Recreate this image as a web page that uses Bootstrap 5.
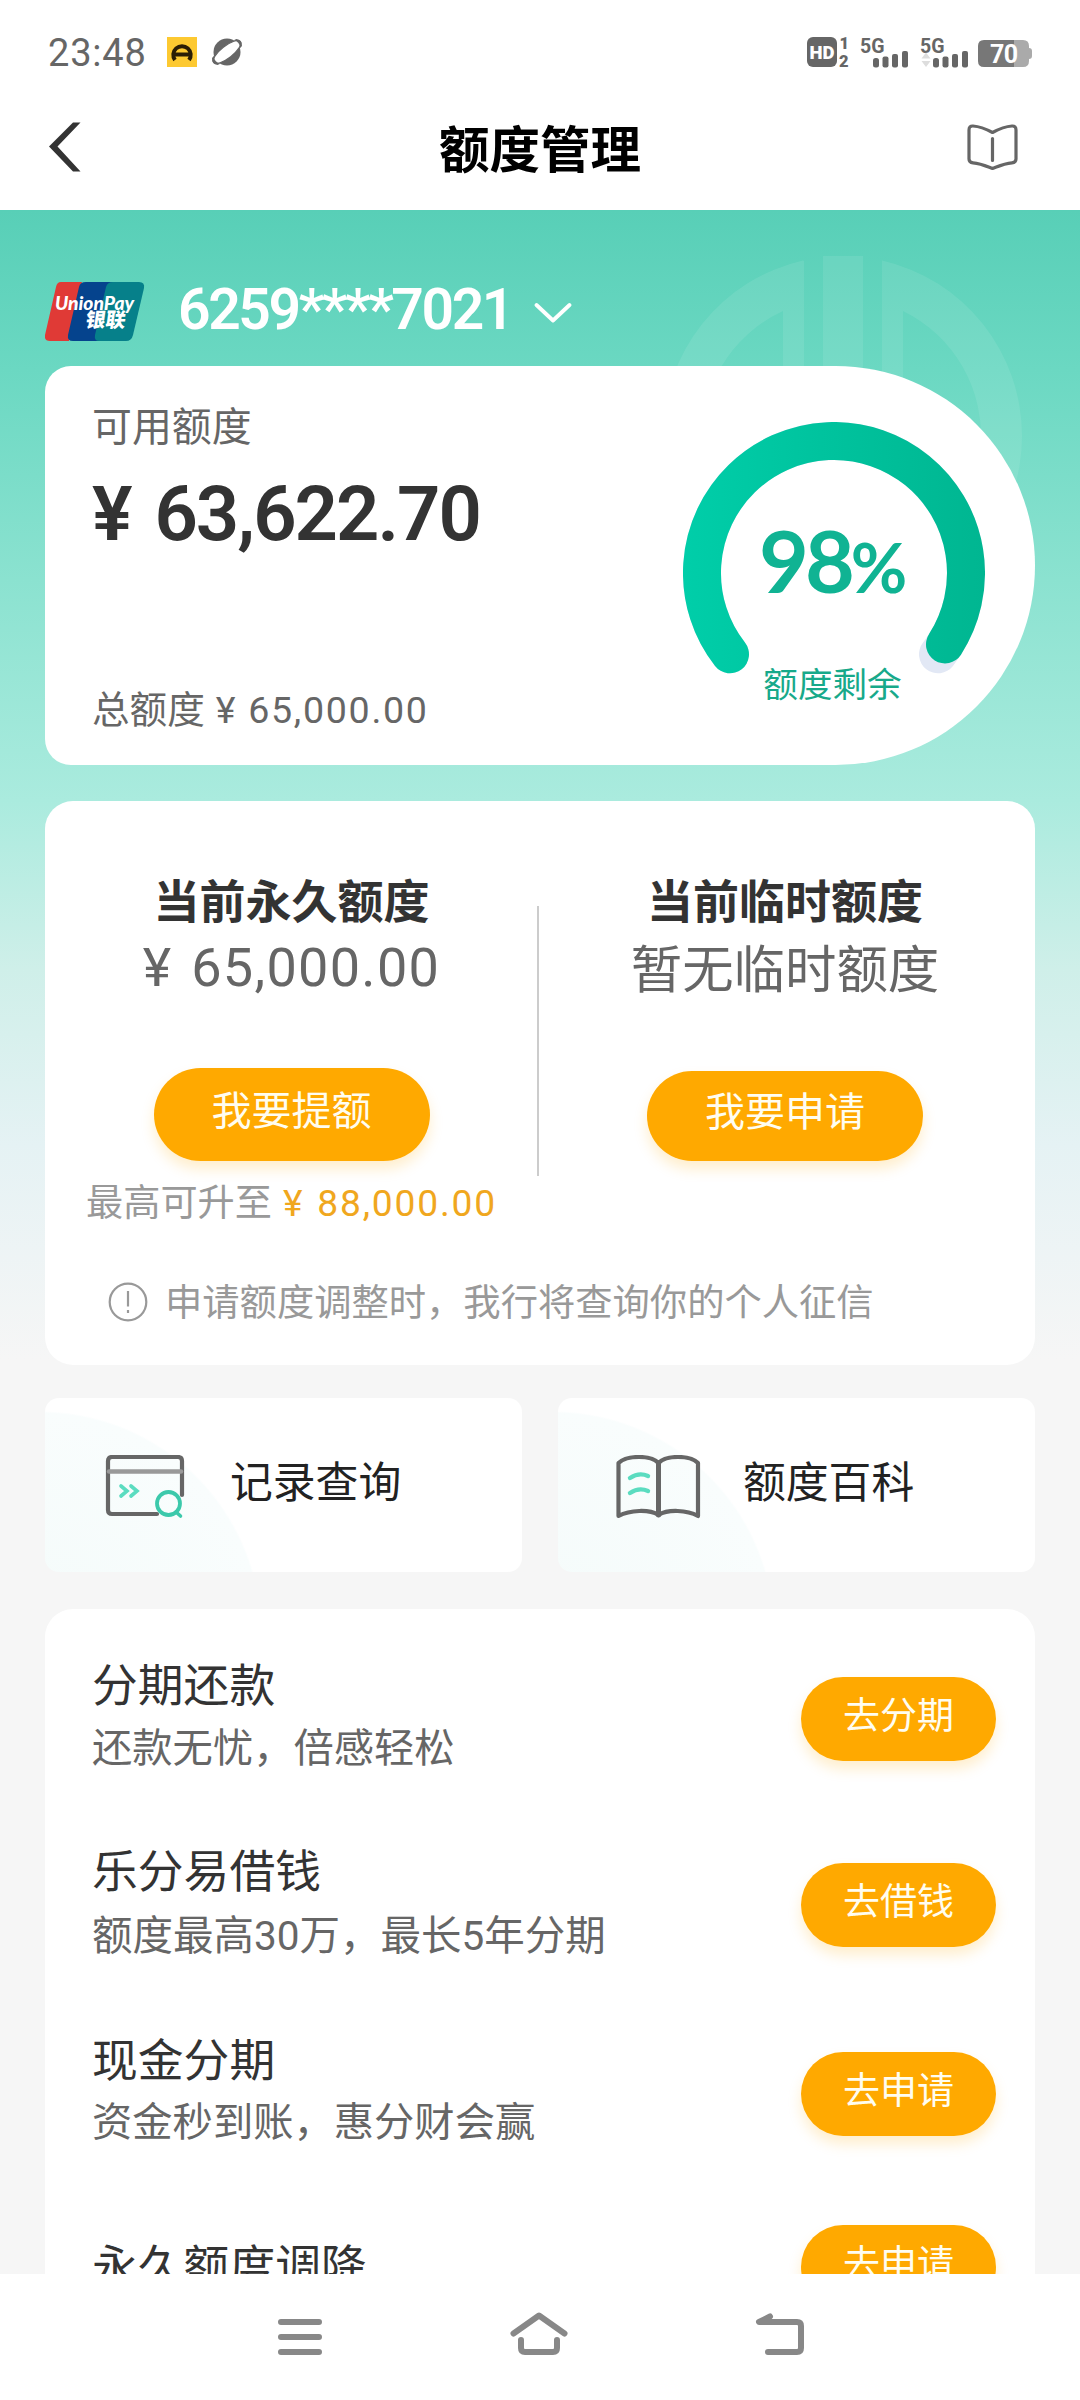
<!DOCTYPE html>
<html lang="zh-CN">
<head>
<meta charset="utf-8">
<meta name="viewport" content="width=device-width, initial-scale=1">
<title>额度管理</title>
<link href="https://cdn.jsdelivr.net/npm/bootstrap@5.3.0/dist/css/bootstrap.min.css" rel="stylesheet">
<style>
  body { font-family: "Noto Sans CJK SC", sans-serif; color: #333; background: #fff; }
  .num { font-family: Roboto, "Noto Sans CJK SC", sans-serif; white-space: pre; }
  .screen { width: 1080px; height: 2400px; }
  .status { height: 100px; padding: 4px 48px 0 48px; color: #666; }
  .clock { font-size: 38px; line-height: 60px; width: 119px; letter-spacing: .8px; padding-top: 2px; }
  .titlebar { height: 110px; padding: 0 62px 0 49px; }
  .titlebar h1 { font-size: 50.5px; line-height: 72px; font-weight: 700; color: #000; margin: -19px 0 0 32px; }
  .titlebar svg { margin-top: -17px; }
  .page { height: 2064px; padding: 0 45px;
    background: linear-gradient(180deg, #58cfb7 0, #6bd8c2 160px, #8be2d0 370px, #aaebde 590px, #cfefe9 760px, #e5f2f4 935px, #f6f6f6 1150px, #f6f6f6 100%); }
  .watermark { left: 663px; top: 46px; }
  .account { height: 156px; padding-top: 72px; }
  .account .num { font-size: 57px; line-height: 56px; font-weight: 600; color: #fff; margin-left: 33px; width: 346px; letter-spacing: -2.4px; }
  .account .caret { margin: 20px 0 0 10px; }
  .panel { background: #fff; border-radius: 28px; }
  .avail { height: 399px; border-radius: 26px 200px 200px 26px; padding-left: 47px; margin-bottom: 36px; }
  .c6 { color: #666; } .c9 { color: #999; }
  .avail .cap1 { font-size: 39.9px; line-height: 60px; padding-top: 28px; }
  .avail .big { font-size: 76px; line-height: 90px; font-weight: 600; margin-top: 15px; letter-spacing: -2px; word-spacing: 7px; }
  .avail .sum { font-size: 37.6px; line-height: 60px; margin-top: 118px; }
  .avail .sum .num { margin-left: 11px; letter-spacing: 1.7px; word-spacing: 0; }
  .gauge { width: 302px; height: 302px; margin: 56px 50px 0 0; }
  .gauge .pct { left: 76px; top: 93px; line-height: 90px; font-family: Lato, sans-serif; font-size: 86px; font-weight: 700; color: #10b393; letter-spacing: -4px; white-space: nowrap; }
  .gauge .pct span { font-size: 69px; letter-spacing: 0; }
  .gauge .lbl { left: 0; width: 302px; top: 230px; font-size: 34.6px; line-height: 60px; color: #17a98a; padding-right: 3px; }
  .limits { height: 564px; margin-bottom: 33px; padding-top: 64px; }
  .limits .halves { height: 345px; }
  .half-l { width: 493px; } .half-r { width: 492px; }
  .limits h2 { font-size: 46px; line-height: 66px; font-weight: 700; color: #333; }
  .limits .val { font-size: 51.4px; line-height: 70px; color: #666; }
  .limits .val.num { font-size: 54px; letter-spacing: 1.3px; word-spacing: 4px; padding-top: 4px; line-height: 66px; }
  .rule { width: 2px; height: 270px; background: #ccc; margin: 41px 0 0 -1px; }
  .pill { background: #ffa900; color: #fffdf0; border-radius: 47px; box-shadow: 0 8px 14px rgba(255,169,0,.2); font-size: 40px; line-height: 48px; flex: none; }
  .pill-a { width: 276px; height: 93px; padding-bottom: 13px; margin-top: 67px; }
  .pill-b { width: 276px; height: 90px; padding-bottom: 14px; margin-top: 70px; }
  .upto { font-size: 37.2px; line-height: 50px; margin-top: 14px; color: #f0a71e; }
  .upto .num { margin-left: 11px; letter-spacing: 1.8px; word-spacing: 2px; }
  .notice { font-size: 37.3px; line-height: 50px; padding-left: 63px; margin-top: 65px; }
  .notice svg { margin: 4px 17px 0 0; }
  .tile { width: 477px; height: 174px; border-radius: 14px; padding-left: 57px;
    background: radial-gradient(circle at -5px 235px, #f4fbfa 0, #f9fdfd 220px, #fff 222px); font-size: 42.8px; color: #222; }
  .tile svg { margin: 3px 40px 0 0; }
  .tile span { line-height: 60px; margin-top: -12px; }
  .offers { height: 720px; margin-top: 37px; padding: 43px 39px 0 47px; }
  .offer h3 { font-size: 45.8px; line-height: 60px; color: #333; font-weight: 400; }
  .offer p { font-size: 40.3px; line-height: 60px; color: #666; padding-top: 3px; }
  .offer .pill { width: 195px; height: 84px; font-size: 37px; margin-top: 25px; padding-bottom: 12px; }
  .offer-1 { height: 186px; } .offer-2 { height: 189px; } .offer-3 { height: 198px; }
  .offer-2 p { padding-top: 5px; font-size: 40.5px; }
  .offer-3 p { padding-top: 2px; }
  .offer-4 h3 { padding-top: 8px; }
  .offer-4 .pill { margin-top: 0; }
  .navkeys { height: 126px; padding: 30px 272px 0 276px; }
</style>
</head>
<body>
<div class="screen d-flex flex-column overflow-hidden">
  <header class="status d-flex align-items-center">
    <div class="clock num">23:48</div>
    <svg width="76" height="30" viewBox="0 0 76 30">
      <rect width="30" height="30" fill="#fdc931"/>
      <path d="M8 23 A8.7 8.7 0 1 1 22 23" fill="none" stroke="#2b1d05" stroke-width="4"/>
      <path d="M7 15.500h16v4H7z" fill="#2b1d05"/>
      <circle cx="60" cy="15" r="13.500" fill="#666"/>
      <g transform="rotate(-38 60 15)"><ellipse cx="60" cy="15" rx="17" ry="6" fill="#fff" stroke="#666" stroke-width="1.200"/><path d="M44.500 10.500q-4 4.500 0 9l3 .5q-4-5 0-10zM75.500 10.500q4 4.500 0 9l-3 .5q4-5 0-10z" fill="#666"/></g>
    </svg>
    <svg class="ms-auto overflow-visible" width="225" height="60" viewBox="807 21 225 60" fill="#666" font-family="Roboto, sans-serif">
      <rect x="807" y="36" width="30" height="30" rx="6"/>
      <text x="809.500" y="58" font-size="19" font-weight="900" fill="#fff" textLength="25" lengthAdjust="spacingAndGlyphs">HD</text>
      <text x="839.500" y="48" font-size="16.500" font-weight="900">1</text>
      <text x="839" y="66" font-size="16.500" font-weight="900">2</text>
      <text x="860" y="51.500" font-size="20.500" font-weight="700" textLength="24.500" lengthAdjust="spacingAndGlyphs">5G</text>
      <text x="920" y="51.500" font-size="20.500" font-weight="700" textLength="24.500" lengthAdjust="spacingAndGlyphs">5G</text>
      <g id="bars"><rect x="873" y="57" width="6" height="9.500" rx="2.500"/><rect x="882.500" y="55.500" width="6" height="11" rx="2"/><rect x="892" y="53" width="6" height="13.500" rx="2"/><rect x="902" y="50" width="6" height="16.500" rx="2"/></g>
      <use href="#bars" x="60"/>
      <path d="M926 51.500l4.500 6h-9zM926 66l-4.500-6h9z" fill="#ddd"/>
      <path d="M984 39h30v27h-30q-6 0-6-6V45q0-6 6-6z" fill="#777"/>
      <path d="M1014 39h9q6 0 6 6v2q3 0 3 3v5q0 3-3 3v2q0 6-6 6h-9z" fill="#aaa"/>
      <text x="990" y="61.500" font-size="25" font-weight="700" fill="#fff" textLength="28">70</text>
    </svg>
  </header>

  <div class="titlebar d-flex align-items-center justify-content-between">
    <svg width="32" height="50" viewBox="0 0 32 50"><path d="M24 0.500h7.500L8.500 24.500l23 25H24L0 24.500z" fill="#333"/></svg>
    <h1>额度管理</h1>
    <svg width="51" height="46" viewBox="0 0 51 46" fill="none" stroke="#666" stroke-width="3.200" stroke-linecap="round" stroke-linejoin="round"><path d="M25.500 8.500C32 5 38 2.500 45 2q4-.3 4 4v29q0 3.500-4 3.800C37 39.500 32 42 25.500 44.500 19 42 14 39.500 6 38.800q-4-.3-4-3.800V6q0-4.300 4-4C13 2.500 19 5 25.500 8.500zM25.500 14.500v22"/></svg>
  </div>

  <main class="page position-relative overflow-hidden">
    <svg class="watermark position-absolute" width="360" height="360" viewBox="-180 -180 360 360" fill="#fff" fill-opacity=".085">
      <path d="M-40-175.500A180 180 0 0 0-40 175.500V135A139 139 0 0 1-60-125V100H-39V-175zM39-175.500A180 180 0 0 1 39 175.500V133A139 139 0 0 0 60-125V100H39zM-20-180H20V100H-20z"/>
    </svg>

    <div class="account d-flex position-relative">
      <svg width="100" height="60" viewBox="0 0 100 60" class="flex-shrink-0">
        <path d="M16 0H37L24 59H5Q-1 59 0 53L11 5Q12 0 16 0z" fill="#e03a36"/>
        <path d="M41 0H70L55 59H28Q22 59 23 53L34 5Q35 0 41 0z" fill="#05438d"/>
        <path d="M68 0H94Q100 0 99 6L88 53Q86.500 59 81 59H54Q49 59 50 53L61 5Q62.500 0 68 0z" fill="#06808a"/>
        <g font-family="Lato, sans-serif" font-weight="900" font-style="italic" fill="#fff"><text x="10" y="28" font-size="18.500" textLength="79" lengthAdjust="spacingAndGlyphs">UnionPay</text></g>
        <text x="40" y="45" font-size="20" font-weight="900" fill="#fff" transform="skewX(-8) translate(6 0)" font-family="Noto Sans CJK SC, sans-serif">银联</text>
      </svg>
      <span class="num">6259****7021</span>
      <svg class="caret" width="38" height="22" viewBox="0 0 38 22"><path d="M2.500 3L19 18.500 35.500 3" fill="none" stroke="#fff" stroke-width="3.800" stroke-linecap="round" stroke-linejoin="round"/></svg>
    </div>

    <section class="panel avail d-flex justify-content-between position-relative">
      <div>
        <div class="cap1 c6">可用额度</div>
        <div class="big num">¥ 63,622.70</div>
        <div class="sum c6">总额度<span class="num">¥ 65,000.00</span></div>
      </div>
      <div class="gauge position-relative">
        <svg width="302" height="302" viewBox="-151 -151 302 302" fill="none" stroke-width="38" stroke-linecap="round">
          <defs><linearGradient id="arc" gradientUnits="userSpaceOnUse" x1="-151" y1="0" x2="151" y2="0"><stop stop-color="#00cea9"/><stop offset="1" stop-color="#00b691"/></linearGradient></defs>
          <path d="M-104 81.300A132 132 0 1 1 104 81.300" stroke="#e2e8f5"/>
          <path d="M-104 81.300A132 132 0 1 1 111 71.400" stroke="url(#arc)"/>
        </svg>
        <div class="pct position-absolute">98<span>%</span></div>
        <div class="lbl position-absolute text-center">额度剩余</div>
      </div>
    </section>

    <section class="panel limits position-relative">
      <div class="halves d-flex">
        <div class="half-l d-flex flex-column align-items-center">
          <h2 class="m-0">当前永久额度</h2>
          <div class="val num">¥ 65,000.00</div>
          <div class="pill pill-a d-flex align-items-center justify-content-center">我要提额</div>
          <div class="upto"><span class="c9">最高可升至</span><span class="num">¥ 88,000.00</span></div>
        </div>
        <div class="rule"></div>
        <div class="half-r d-flex flex-column align-items-center">
          <h2 class="m-0">当前临时额度</h2>
          <div class="val">暂无临时额度</div>
          <div class="pill pill-b d-flex align-items-center justify-content-center">我要申请</div>
        </div>
      </div>
      <div class="notice c9 d-flex align-items-center">
        <svg width="40" height="40" viewBox="0 0 40 40" fill="none" stroke="#999" stroke-width="2.200"><circle cx="20" cy="20" r="18.300"/><path d="M20 9v15.500M20 28v3"/></svg>
        <span>申请额度调整时，我行将查询你的个人征信</span>
      </div>
    </section>

    <div class="d-flex justify-content-between">
      <div class="tile d-flex align-items-center">
        <svg width="88" height="64" viewBox="-1 0 88 64" fill="none" stroke-linecap="round">
          <path d="M54 59H9q-4 0-4-4V6q0-4 4-4h66q4 0 4 4v34" stroke="#666" stroke-width="4.200"/>
          <path d="M6 16.500h72" stroke="#999" stroke-width="4.500"/>
          <path d="M18 31l6 5-6 5M28 31l6 5-6 5" stroke="#5bdcc0" stroke-width="3.600"/>
          <circle cx="65.500" cy="48.500" r="11.500" stroke="#3cc9ab" stroke-width="3.800"/><path d="M73 57l4.500 4" stroke="#3cc9ab" stroke-width="3.600"/>
        </svg>
        <span>记录查询</span>
      </div>
      <div class="tile d-flex align-items-center">
        <svg width="88" height="64" viewBox="0 0 88 64" fill="none" stroke-linecap="round" stroke-linejoin="round">
          <path d="M43.500 8C36 0 12 0 3.500 8V61C15 55 34 54 43.500 60 53 54 72 55 83 61V8C75 0 51 0 43.500 8z" stroke="#666" stroke-width="4.200"/>
          <path d="M43.500 8V60" stroke="#666" stroke-width="5"/>
          <path d="M15 23q9-6 18-2M15 38q9-6 18-2" stroke="#5bdcc0" stroke-width="4.400"/>
        </svg>
        <span>额度百科</span>
      </div>
    </div>

    <section class="panel offers">
      <div class="offer offer-1 d-flex justify-content-between align-items-start">
        <div><h3 class="m-0">分期还款</h3><p class="m-0">还款无忧，倍感轻松</p></div>
        <div class="pill d-flex align-items-center justify-content-center">去分期</div>
      </div>
      <div class="offer offer-2 d-flex justify-content-between align-items-start">
        <div><h3 class="m-0">乐分易借钱</h3><p class="m-0">额度最高<span class="num">30</span>万，最长<span class="num">5</span>年分期</p></div>
        <div class="pill d-flex align-items-center justify-content-center">去借钱</div>
      </div>
      <div class="offer offer-3 d-flex justify-content-between align-items-start">
        <div><h3 class="m-0">现金分期</h3><p class="m-0">资金秒到账，惠分财会赢</p></div>
        <div class="pill d-flex align-items-center justify-content-center">去申请</div>
      </div>
      <div class="offer offer-4 d-flex justify-content-between align-items-start">
        <h3 class="mb-0">永久额度调降</h3>
        <div class="pill d-flex align-items-center justify-content-center">去申请</div>
      </div>
    </section>
  </main>

  <nav class="navkeys d-flex align-items-start justify-content-between bg-white">
    <svg width="48" height="60" viewBox="276 2304 48 60" stroke="#888" stroke-width="6" stroke-linecap="round"><path d="M281 2322h38M281 2337h38M281 2352h38"/></svg>
    <svg width="60" height="60" viewBox="510 2304 60 60" stroke="#888" stroke-width="6" stroke-linecap="round" stroke-linejoin="round" fill="none"><path d="M514.500 2333.500L540 2315.500l25.500 18M522 2340v8q0 4 4 4h28q4 0 4-4v-8"/></svg>
    <svg width="54" height="60" viewBox="754 2304 54 60" stroke="#888" stroke-width="6" stroke-linecap="round" stroke-linejoin="round" fill="none"><path d="M770 2316.500L759 2322h38q4 0 4 4v22q0 4-4 4h-29"/></svg>
  </nav>
</div>
<script src="https://cdn.jsdelivr.net/npm/bootstrap@5.3.0/dist/js/bootstrap.bundle.min.js"></script>
</body>
</html>
